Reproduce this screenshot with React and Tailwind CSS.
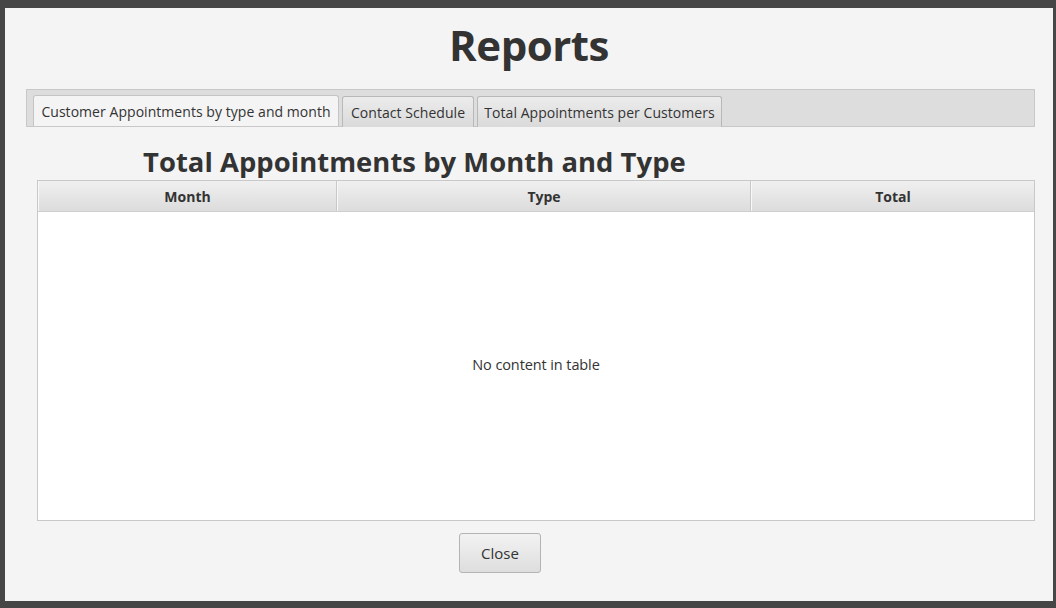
import React from "react";

const tabs = [
  { label: "Customer Appointments by type and month", w: "w-[306px]", active: true },
  { label: "Contact Schedule", w: "w-[132px]" },
  { label: "Total Appointments per Customers", w: "w-[245px]" },
];

const cols = [
  { label: "Month", w: "w-[299px]" },
  { label: "Type", w: "w-[414px]" },
  { label: "Total", w: "flex-1" },
];

export default function App() {
  return (
    <div
      className="w-[1056px] h-[608px] bg-[#464646] pl-[5px] pt-[8px] pr-[3px] pb-[7px] text-[#333333]"
      style={{ fontFamily: "'Open Sans', 'Noto Sans', sans-serif" }}
    >
      <div className="w-full h-full bg-[#f4f4f4] flex flex-col">
        <h1 className="text-[42px] font-bold text-center leading-none mt-[16px] h-[65px] tracking-[-0.5px]">
          Reports
        </h1>

        {/* tab bar */}
        <div className="ml-[21px] w-[1009px] h-[38px] bg-[#dddddd] border border-[#c8c8c8] flex items-end pl-[6px] gap-[3px] shrink-0">
          {tabs.map((t) => (
            <div
              key={t.label}
              className={`${t.w} h-[31px] rounded-t-[3px] border border-b-0 flex items-center justify-center text-[14px] ${
                t.active
                  ? "bg-[#f4f4f4] border-[#c4c4c4]"
                  : "bg-gradient-to-b from-[#ececec] to-[#dadada] border-[#b8b8b8] -mb-px h-[30px]"
              }`}
            >
              <span className="tracking-[0.05px]">{t.label}</span>
            </div>
          ))}
        </div>

        <h2 className="text-[27.4px] font-bold leading-none ml-[138px] mt-[21px] h-[32px] tracking-[0.05px]">
          Total Appointments by Month and Type
        </h2>

        {/* table */}
        <div className="ml-[32px] w-[998px] h-[341px] border border-[#c8c8c8] bg-white flex flex-col">
          <div className="h-[31px] flex bg-gradient-to-b from-[#f0f0f0] to-[#dcdcdc] border-b border-[#cfcfcf] shrink-0">
            {cols.map((c, i) => (
              <div
                key={c.label}
                className={`${c.w} flex items-center justify-center text-[14px] font-bold ${
                  i < cols.length - 1 ? "border-r border-[#c8c8c8]" : ""
                } border-l border-l-[#f8f8f8]`}
              >
                {c.label}
              </div>
            ))}
          </div>
          <div className="flex-1 flex items-center justify-center text-[14.5px]">
            <span className="-mt-[2px] tracking-[-0.1px]">No content in table</span>
          </div>
        </div>

        <div className="flex mt-[12px]">
          <button className="w-[82px] h-[40px] ml-[454px] rounded-[3px] border border-[#b4b4b4] bg-gradient-to-b from-[#f2f2f2] to-[#dedede] text-[15px] text-[#333333]">
            Close
          </button>
        </div>
      </div>
    </div>
  );
}
